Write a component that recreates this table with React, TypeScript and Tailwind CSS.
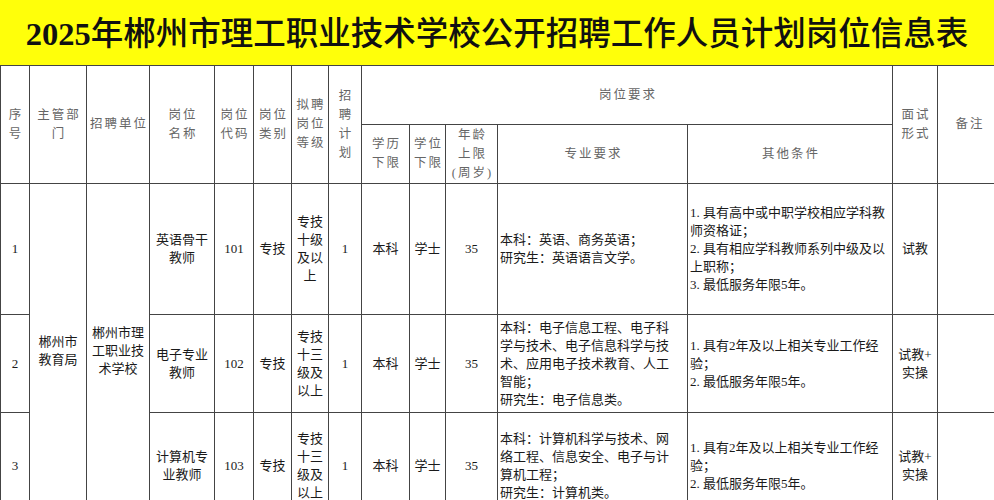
import React from "react";

const font = { fontFamily: '"Liberation Serif", "Noto Sans CJK SC", serif' };

const td = "border border-[#444] p-0 text-center align-middle";
const th = `${td} text-[#666] text-[12.5px] leading-[19px] tracking-[2px] font-normal pl-[2px]`;
const body = `${td} text-[#1a1a1a] text-[13px] leading-[18px]`;
const left = `${td} text-[#1a1a1a] text-[13px] leading-[18px] !text-left pl-[2px] whitespace-nowrap`;

const Lines = ({ t }: { t: string[] }) => (
  <>
    {t.map((s, i) => (
      <React.Fragment key={i}>
        {i > 0 && <br />}
        {s}
      </React.Fragment>
    ))}
  </>
);

const widths = [29, 57, 63, 65, 39, 38, 37, 33, 48, 36, 52, 190, 205, 45, 63];

const rows = [
  {
    no: "1",
    name: ["英语骨干", "教师"],
    code: "101",
    level: ["专技", "十级", "及以", "上"],
    major: ["本科：英语、商务英语；", "研究生：英语语言文学。"],
    other: [
      "1. 具有高中或中职学校相应学科教",
      "师资格证；",
      "2. 具有相应学科教师系列中级及以",
      "上职称；",
      "3. 最低服务年限5年。",
    ],
    test: ["试教"],
    h: "h-[131px]",
  },
  {
    no: "2",
    name: ["电子专业", "教师"],
    code: "102",
    level: ["专技", "十三", "级及", "以上"],
    major: [
      "本科：电子信息工程、电子科",
      "学与技术、电子信息科学与技",
      "术、应用电子技术教育、人工",
      "智能；",
      "研究生：电子信息类。",
    ],
    other: ["1. 具有2年及以上相关专业工作经", "验；", "2. 最低服务年限5年。"],
    test: ["试教+", "实操"],
    h: "h-[98px]",
  },
  {
    no: "3",
    name: ["计算机专", "业教师"],
    code: "103",
    level: ["专技", "十三", "级及", "以上"],
    major: [
      "本科：计算机科学与技术、网",
      "络工程、信息安全、电子与计",
      "算机工程；",
      "研究生：计算机类。",
    ],
    other: ["1. 具有2年及以上相关专业工作经", "验；", "2. 最低服务年限5年。"],
    test: ["试教+", "实操"],
    h: "h-[106px]",
  },
];

export default function App() {
  return (
    <div className="w-[994px] h-[500px] overflow-hidden bg-white" style={font}>
      <div className="h-[65px] bg-[#ffff0a] flex items-center justify-center pt-[4px]">
        <h1 className="text-[32.5px] font-medium text-[#111] whitespace-nowrap">
          <span className="font-bold">2025</span>年郴州市理工职业技术学校公开招聘工作人员计划岗位信息表
        </h1>
      </div>
      <table className="table-fixed border-collapse w-[1000px]">
        <colgroup>
          {widths.map((w, i) => (
            <col key={i} style={{ width: w }} />
          ))}
        </colgroup>
        <thead>
          <tr className="h-[59px]">
            <th rowSpan={2} className={th}>
              <Lines t={["序", "号"]} />
            </th>
            <th rowSpan={2} className={th}>
              <Lines t={["主管部", "门"]} />
            </th>
            <th rowSpan={2} className={th}>
              招聘单位
            </th>
            <th rowSpan={2} className={th}>
              <Lines t={["岗位", "名称"]} />
            </th>
            <th rowSpan={2} className={th}>
              <Lines t={["岗位", "代码"]} />
            </th>
            <th rowSpan={2} className={th}>
              <Lines t={["岗位", "类别"]} />
            </th>
            <th rowSpan={2} className={th}>
              <Lines t={["拟聘", "岗位", "等级"]} />
            </th>
            <th rowSpan={2} className={th}>
              <Lines t={["招", "聘", "计", "划"]} />
            </th>
            <th colSpan={5} className={th}>
              岗位要求
            </th>
            <th rowSpan={2} className={th}>
              <Lines t={["面试", "形式"]} />
            </th>
            <th rowSpan={2} className={th}>
              备注
            </th>
          </tr>
          <tr className="h-[59px]">
            <th className={th}>
              <Lines t={["学历", "下限"]} />
            </th>
            <th className={th}>
              <Lines t={["学位", "下限"]} />
            </th>
            <th className={th}>
              <Lines t={["年龄", "上限", "(周岁)"]} />
            </th>
            <th className={th}>专业要求</th>
            <th className={th}>其他条件</th>
          </tr>
        </thead>
        <tbody>
          {rows.map((r, i) => (
            <tr key={r.no} className={r.h}>
              <td className={body}>{r.no}</td>
              {i === 0 && (
                <>
                  <td rowSpan={3} className={body}>
                    <Lines t={["郴州市", "教育局"]} />
                  </td>
                  <td rowSpan={3} className={body}>
                    <Lines t={["郴州市理", "工职业技", "术学校"]} />
                  </td>
                </>
              )}
              <td className={body}>
                <Lines t={r.name} />
              </td>
              <td className={body}>{r.code}</td>
              <td className={body}>专技</td>
              <td className={body}>
                <Lines t={r.level} />
              </td>
              <td className={body}>1</td>
              <td className={body}>本科</td>
              <td className={body}>学士</td>
              <td className={body}>35</td>
              <td className={left}>
                <Lines t={r.major} />
              </td>
              <td className={left}>
                <Lines t={r.other} />
              </td>
              <td className={body}>
                <Lines t={r.test} />
              </td>
              <td className={body}></td>
            </tr>
          ))}
        </tbody>
      </table>
    </div>
  );
}
